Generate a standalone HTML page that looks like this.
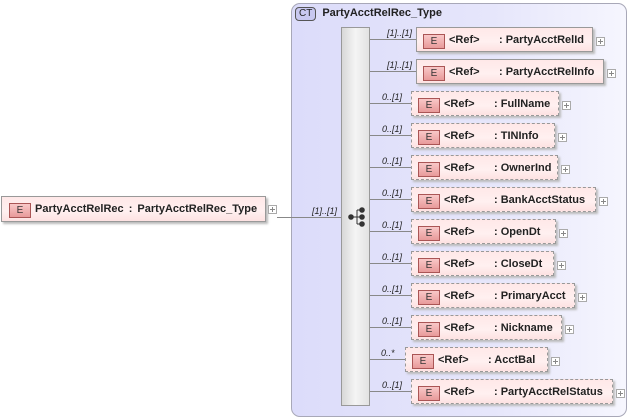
<!DOCTYPE html>
<html><head><meta charset="utf-8"><style>
body{margin:0;width:630px;height:420px;background:#fff;position:relative;overflow:hidden;font-family:"Liberation Sans",sans-serif;}
.ct{position:absolute;left:291px;top:3px;width:336px;height:414px;border:1px solid #a8a8b8;border-radius:9px;background:linear-gradient(90deg,#dcdcfa 0%,#e6e6fb 60%,#f6f6fe 100%);box-sizing:border-box;}
.ctlab{position:absolute;left:295px;top:7px;font-size:11px;font-weight:bold;color:#222;}
.ctb{display:inline-block;border:1px solid #555;border-radius:4px;background:#c8c8f0;font-weight:normal;font-size:10px;padding:0 3px;margin-right:6px;line-height:12px;}
.seq{position:absolute;left:341px;top:27px;width:29px;height:379px;background:linear-gradient(90deg,#d8d8d8,#f4f4f4 50%,#e2e2e2);border:1px solid #999;box-sizing:border-box;}
.box{position:absolute;height:25px;background:linear-gradient(180deg,#ffe8e8,#fff0f0 60%,#fde2e2);box-sizing:border-box;box-shadow:2px 2px 2px #bbb;font-size:11px;font-weight:bold;color:#222;}
.sol{border:1px solid #999;}
.das{border:1px dashed #999;}
.badge{position:absolute;left:6px;top:6px;width:22px;height:15px;border:1px solid #a55;background:linear-gradient(180deg,#f9c8c8,#e89a9a);box-sizing:border-box;font-size:10px;font-weight:normal;text-align:center;line-height:14px;color:#333;}
.r{position:absolute;left:32px;top:6px;}
.n{position:absolute;left:82px;top:6px;white-space:nowrap;}
.plus{position:absolute;width:9px;height:9px;border:1px solid #aaa;background:#fff;box-sizing:border-box;}
.plus:before{content:"";position:absolute;left:1px;top:3px;width:5px;height:1px;background:#888;}
.plus:after{content:"";position:absolute;left:3px;top:1px;width:1px;height:5px;background:#888;}
.ln{position:absolute;height:1px;background:#888;}
.c{position:absolute;font-size:9px;font-style:italic;color:#222;}
</style></head><body>
<div class="ct"></div>
<div class="ctlab"><span class="ctb">CT</span>PartyAcctRelRec_Type</div>
<div class="seq"></div>
<svg style="position:absolute;left:341px;top:200px" width="30" height="34"><g fill="#333" stroke="#333"><line x1="10" y1="17" x2="16" y2="17"/><line x1="16" y1="10" x2="16" y2="24"/><line x1="16" y1="10" x2="21" y2="10"/><line x1="16" y1="17" x2="21" y2="17"/><line x1="16" y1="24" x2="21" y2="24"/><circle cx="10" cy="17" r="2.3"/><circle cx="21" cy="10" r="2.3"/><circle cx="21" cy="17" r="2.3"/><circle cx="21" cy="24" r="2.3"/></g></svg>

<div class="box sol" style="left:1px;top:196px;width:265px;height:26px;"><div class="badge" style="left:7px;">E</div><span style="position:absolute;left:33px;top:6px;white-space:nowrap;word-spacing:2px">PartyAcctRelRec : PartyAcctRelRec_Type</span></div>
<div class="plus" style="left:268px;top:205px"></div>
<div class="ln" style="left:277px;top:217px;width:64px"></div>
<div class="c" style="left:312px;top:206px">[1]..[1]</div>

<div id="rows"></div>
<script>
var rows=[["[1]..[1]",416,593,"PartyAcctRelId",1],["[1]..[1]",416,604,"PartyAcctRelInfo",1],["0..[1]",411,559,"FullName",0],["0..[1]",411,555,"TINInfo",0],["0..[1]",411,558,"OwnerInd",0],["0..[1]",411,596,"BankAcctStatus",0],["0..[1]",411,556,"OpenDt",0],["0..[1]",411,554,"CloseDt",0],["0..[1]",411,575,"PrimaryAcct",0],["0..[1]",411,562,"Nickname",0],["0..*",405,548,"AcctBal",0],["0..[1]",411,613,"PartyAcctRelStatus",0]];
var h="";rows.forEach(function(r,i){var t=27+32*i;
h+='<div class="ln" style="left:370px;top:'+(t+12)+'px;width:'+(r[1]-370)+'px"></div>';
h+='<div class="c" style="left:'+(r[1]-(r[0].length>5?29:24))+'px;top:'+(t+1)+'px">'+r[0]+'</div>';
h+='<div class="box '+(r[4]?'sol':'das')+'" style="left:'+r[1]+'px;top:'+t+'px;width:'+(r[2]-r[1])+'px"><div class="badge">E</div><span class="r">&lt;Ref&gt;</span><span class="n">: '+r[3]+'</span></div>';
h+='<div class="plus" style="left:'+(r[2]+3)+'px;top:'+(t+10)+'px"></div>';});
document.getElementById("rows").innerHTML=h;
</script>
</body></html>
